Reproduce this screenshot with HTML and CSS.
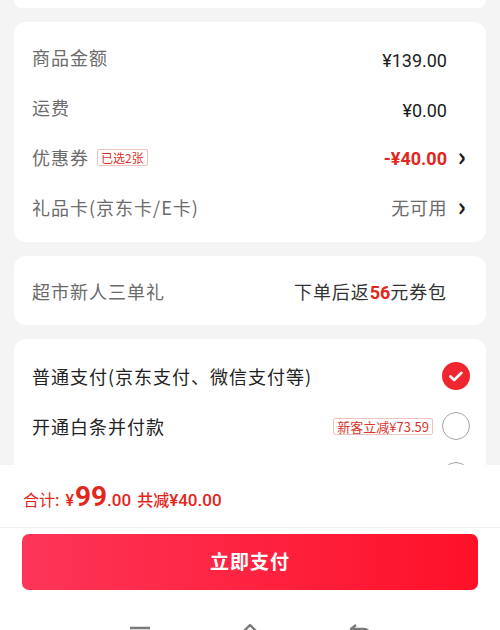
FILE: index.html
```html
<!DOCTYPE html>
<html lang="zh-CN">

<head>
    <meta charset="UTF-8" />
    <meta name="viewport" content="width=device-width, initial-scale=1.0" />
    <title>确认订单</title>
    <link rel="stylesheet" href="styles.css">
</head>

<body>
    <div class="page">
        <div class="card card-top"></div>

        <!-- Amounts -->
        <div class="card list">
            <div class="row">
                <span class="label">商品金额</span>
                <span class="value num">¥139.00</span>
                <span class="arrow hidden"></span>
            </div>
            <div class="row">
                <span class="label">运费</span>
                <span class="value num">¥0.00</span>
                <span class="arrow hidden"></span>
            </div>
            <div class="row">
                <span class="label">优惠券 <span class="tag">已选2张</span></span>
                <span class="value num red">-¥40.00</span>
                <span class="arrow">&rsaquo;</span>
            </div>
            <div class="row">
                <span class="label">礼品卡(京东卡/E卡)</span>
                <span class="value muted">无可用</span>
                <span class="arrow">&rsaquo;</span>
            </div>
        </div>

        <!-- New user gift -->
        <div class="card gift">
            <span class="label">超市新人三单礼</span>
            <span class="value plain">下单后返<b class="red num">56</b>元券包</span>
            <span class="arrow hidden"></span>
        </div>

        <!-- Payment methods -->
        <div class="card list pay">
            <div class="row">
                <span class="pay-name">普通支付(京东支付、微信支付等)</span>
                <span class="radio checked">
                    <svg width="14" height="11" viewBox="0 0 14 11">
                        <path d="M1.5 5.5 L5.2 9 L12.5 1.8" fill="none" stroke="#fff" stroke-width="2.6"
                            stroke-linecap="round" stroke-linejoin="round" />
                    </svg>
                </span>
            </div>
            <div class="row">
                <span class="pay-name">开通白条并付款</span>
                <span class="tag tag-lg">新客立减¥73.59</span>
                <span class="radio"></span>
            </div>
            <div class="row">
                <span class="pay-name"></span>
                <span class="radio"></span>
            </div>
        </div>
    </div>

    <!-- Footer bar over content -->
    <div class="footer">
        <div class="total">
            <span class="t-label">合计:</span>
            <span class="t-yen num">¥</span><span class="t-big num">99</span><span class="t-dec num">.00</span>
            <span class="t-save">共减<span class="num">¥40.00</span></span>
        </div>
        <div class="pay-btn">立即支付</div>
        <div class="navbar">
            <svg width="24" height="20" viewBox="0 0 24 20">
                <path d="M2 5 H22 M2 12 H22 M2 19 H22" stroke="#7a7a7a" stroke-width="2.4" />
            </svg>
            <svg width="24" height="20" viewBox="0 0 24 20">
                <path d="M3 11 L12 2 L21 11 M6 8 V20 M18 8 V20" fill="none" stroke="#7a7a7a" stroke-width="2.4"
                    stroke-linejoin="round" />
            </svg>
            <svg width="24" height="20" viewBox="0 0 24 20">
                <path d="M8 2 L3 6 L8 10 M3 6 H16 A6 6 0 0 1 16 18 H8" fill="none" stroke="#7a7a7a"
                    stroke-width="2.4" stroke-linejoin="round" />
            </svg>
        </div>
    </div>
</body>

</html>
```

FILE: styles.css
```css
* {
    box-sizing: border-box;
}

body {
    margin: 0;
    width: 500px;
    height: 630px;
    overflow: hidden;
    position: relative;
    background-color: #f4f4f4;
    font-family: "Noto Sans CJK SC", "Noto Sans", sans-serif;
    color: #262626;
}

.page {
    padding: 0 14px;
}

.card {
    background-color: #fff;
    border-radius: 12px;
    margin-top: 14px;
}

.card-top {
    margin-top: 0;
    height: 8px;
    border-radius: 0 0 12px 12px;
}

.list {
    padding: 10px 0;
}

.row,
.gift {
    display: flex;
    align-items: center;
    height: 50px;
    padding: 0 20px 0 18px;
}

.gift {
    height: 69px;
}

.label {
    flex: 1;
    display: flex;
    align-items: center;
    font-size: 18px;
    letter-spacing: 1px;
    color: #6b6b6b;
}

.value {
    font-size: 18px;
    color: #1c1c1c;
}

.num {
    font-family: Roboto, "Noto Sans", sans-serif;
}

.value.num {
    font-weight: 400;
    position: relative;
    top: 3px;
}

.value.red {
    font-weight: 700;
    top: 1px;
}

.red {
    color: #e3261c;
}

.muted {
    color: #6b6b6b;
    letter-spacing: 0.6px;
}

.plain {
    letter-spacing: 0.9px;
    color: #333;
}

.plain b {
    font-weight: 700;
    letter-spacing: 0;
}

.arrow {
    width: 19px;
    text-align: right;
    font-size: 26px;
    line-height: 1;
    font-weight: 700;
    color: #1e1e1e;
    position: relative;
    top: -2px;
}

.hidden {
    visibility: hidden;
}

.tag {
    display: inline-block;
    margin-left: 8px;
    padding: 0 3px;
    height: 17px;
    line-height: 15px;
    font-size: 12px;
    letter-spacing: 0;
    color: #d9342b;
    border: 1px solid #efc2bd;
    border-radius: 2px;
}

.tag-lg {
    font-size: 13px;
    margin: 0 9px 0 0;
}

/* payment */
.pay {
    padding-top: 12px;
}

.pay .row {
    padding-right: 16px;
}

.pay-name {
    flex: 1;
    font-size: 18px;
    letter-spacing: 1px;
    color: #222;
}

.radio {
    width: 28px;
    height: 28px;
    border-radius: 50%;
    border: 1.5px solid #a3a3a3;
    display: flex;
    align-items: center;
    justify-content: center;
}

.radio.checked {
    border: none;
    background-color: #f0262f;
}

/* footer */
.footer {
    position: absolute;
    left: 0;
    right: 0;
    top: 465px;
    bottom: 0;
    background-color: #fff;
}

.total {
    height: 63px;
    padding: 0 0 0 23px;
    border-bottom: 1px solid #f0f0f0;
    display: flex;
    align-items: baseline;
    padding-top: 15px;
    color: #e3261c;
}

.t-label {
    font-size: 16px;
    margin-right: 6px;
}

.t-yen {
    font-size: 16px;
    font-weight: 500;
    margin-right: 1px;
}

.t-big {
    font-size: 28px;
    font-weight: 700;
}

.t-dec {
    font-size: 17px;
    font-weight: 500;
    margin-right: 6px;
}

.t-save {
    font-size: 16px;
    font-weight: 500;
}

.t-save .num {
    font-size: 17px;
}

.pay-btn {
    margin: 6px 22px 0;
    height: 56px;
    padding-bottom: 4px;
    border-radius: 7px;
    background: linear-gradient(90deg, #fd3558, #fe1128);
    color: #fff;
    font-size: 19px;
    font-weight: 700;
    letter-spacing: 1px;
    display: flex;
    align-items: center;
    justify-content: center;
}

.navbar {
    display: flex;
    justify-content: center;
    gap: 86px;
    padding-top: 33px;
}
```
